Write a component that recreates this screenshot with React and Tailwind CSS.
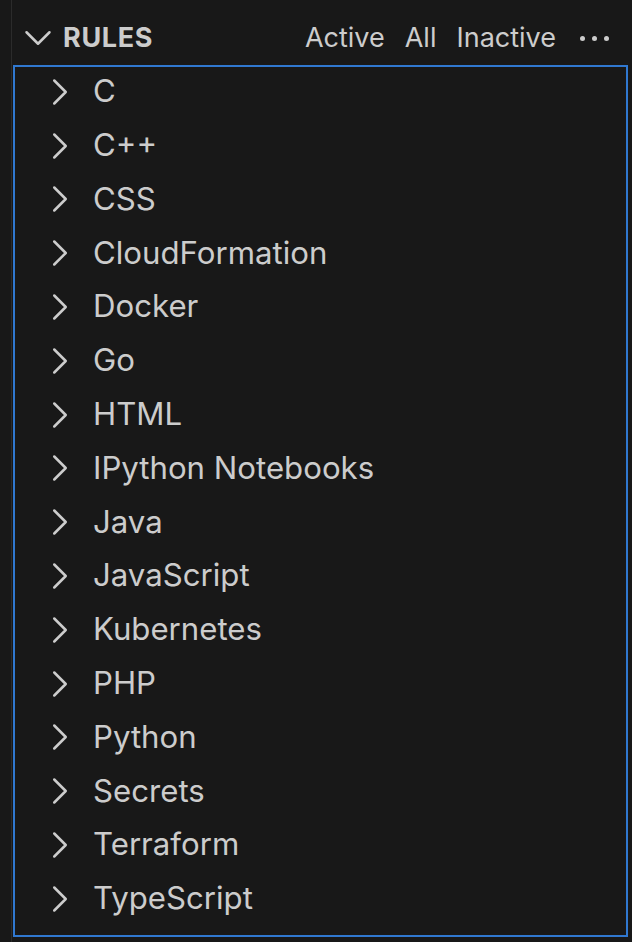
import { ChevronDown, ChevronRight } from "lucide-react";

const rules = [
  "C",
  "C++",
  "CSS",
  "CloudFormation",
  "Docker",
  "Go",
  "HTML",
  "IPython Notebooks",
  "Java",
  "JavaScript",
  "Kubernetes",
  "PHP",
  "Python",
  "Secrets",
  "Terraform",
  "TypeScript",
];

const RuleRow = ({ name }) => (
  <div className="flex items-center h-[53.8px] pb-[4px] shrink-0">
    <ChevronRight size={46} strokeWidth={1.3} className="text-[#cccccc] ml-[22px] mr-[10px] shrink-0" />
    <span className="text-[31.2px] text-[#cccccc] leading-none">{name}</span>
  </div>
);

export default function App() {
  return (
    <div
      className="w-[632px] h-[942px] bg-[#181818] flex overflow-hidden"
      style={{ fontFamily: "Inter, 'Noto Sans', sans-serif" }}
    >
      <div className="w-[11px] shrink-0" />
      <div className="w-px bg-[#2b2b2b] shrink-0" />
      <div className="flex-1 flex flex-col pl-px pr-[4px] pb-[5px] pt-[11px]">
        {/* section header */}
        <div className="h-[54px] flex items-center shrink-0">
          <ChevronDown size={46} strokeWidth={1.3} className="text-[#cccccc] ml-[2px] mr-[2px] shrink-0" />
          <span className="text-[27px] font-bold text-[#cccccc] tracking-wide">RULES</span>
          <div className="ml-auto flex items-center gap-[20px] text-[27px] text-[#cccccc] pr-[19px]">
            <span>Active</span>
            <span>All</span>
            <span>Inactive</span>
            <span className="ml-[4px] flex gap-[7px] items-center">
              <span className="w-[5px] h-[5px] rounded-full bg-[#cccccc]" />
              <span className="w-[5px] h-[5px] rounded-full bg-[#cccccc]" />
              <span className="w-[5px] h-[5px] rounded-full bg-[#cccccc]" />
            </span>
          </div>
        </div>

        {/* rules tree */}
        <div className="flex-1 border-2 border-[#3078d0] flex flex-col">
          {rules.map((r) => (
            <RuleRow key={r} name={r} />
          ))}
        </div>
      </div>
    </div>
  );
}
